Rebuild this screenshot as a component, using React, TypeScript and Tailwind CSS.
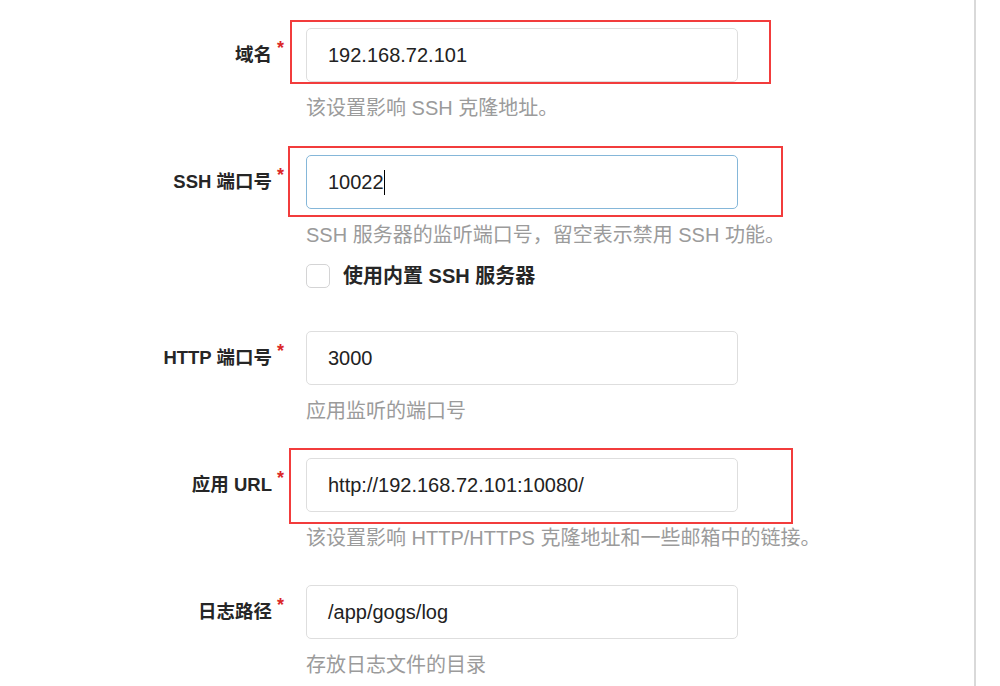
import type { ReactNode } from "react";

const font = { fontFamily: '"Liberation Sans", "Noto Sans CJK SC", sans-serif' };

interface FieldProps {
  label: string;
  value: string;
  help: string;
  focused?: boolean;
  caret?: boolean;
  box?: string;
  children?: ReactNode;
}

function Field({ label, value, help, focused, caret, box, children }: FieldProps) {
  return (
    <div className="flex">
      <div className="w-[284px] h-[54px] flex items-center justify-end text-[18.5px] font-bold text-[#262626]">
        <span>{label}</span>
        <span className="relative -top-[7px] ml-[5px] text-[#db2828] text-[18px]">*</span>
      </div>
      <div className="ml-[22px] w-[432px]">
        <div className="relative h-[54px]">
          <div
            className={
              "h-full rounded-[5px] border bg-white flex items-center pl-[21px] text-[20px] text-[#222] " +
              (focused ? "border-[#85b7d9]" : "border-[#dedede]")
            }
          >
            <span>{value}</span>
            {caret && <span className="w-px h-[25px] bg-black" />}
          </div>
          {box && <div className={"absolute border-2 border-[#f23c3c] pointer-events-none " + box} />}
        </div>
        <div className="mt-[13px] leading-[26px] text-[20px] text-[#9b9b9b] whitespace-nowrap">{help}</div>
        {children}
      </div>
    </div>
  );
}

export default function App() {
  return (
    <div className="flex bg-white w-[1000px] h-[686px] overflow-hidden" style={font}>
      <div className="w-[976px] h-full border-r-2 border-[#d9d9d9] pt-[28px] flex flex-col gap-[34px]">
        <Field
          label="域名"
          value="192.168.72.101"
          help="该设置影响 SSH 克隆地址。"
          box="-left-[16px] -right-[33px] -top-[8px] -bottom-[2px]"
        />
        <Field
          label="SSH 端口号"
          value="10022"
          help="SSH 服务器的监听端口号，留空表示禁用 SSH 功能。"
          focused
          caret
          box="-left-[18px] -right-[45px] -top-[9px] -bottom-[8px]"
        >
          <div className="mt-[16px] mb-[9px] flex items-center h-[24px]">
            <div className="w-[24px] h-[24px] rounded-[5px] border border-[#d4d4d5] bg-white" />
            <span className="ml-[13px] text-[20px] font-bold text-[#262626]">使用内置 SSH 服务器</span>
          </div>
        </Field>
        <Field label="HTTP 端口号" value="3000" help="应用监听的端口号" />
        <Field
          label="应用 URL"
          value="http://192.168.72.101:10080/"
          help="该设置影响 HTTP/HTTPS 克隆地址和一些邮箱中的链接。"
          box="-left-[17px] -right-[55px] -top-[10px] -bottom-[12px]"
        />
        <Field label="日志路径" value="/app/gogs/log" help="存放日志文件的目录" />
      </div>
    </div>
  );
}
